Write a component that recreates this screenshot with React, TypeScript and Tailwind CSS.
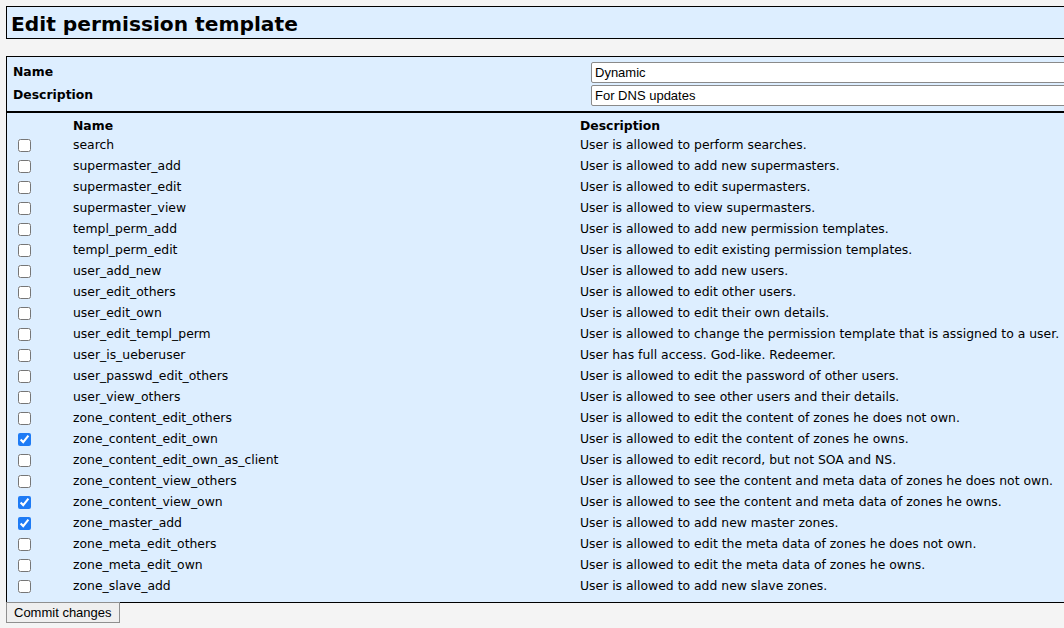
import React, { useState } from 'react';

const PERMS: [string, string, boolean][] = [
  ['search', 'User is allowed to perform searches.', false],
  ['supermaster_add', 'User is allowed to add new supermasters.', false],
  ['supermaster_edit', 'User is allowed to edit supermasters.', false],
  ['supermaster_view', 'User is allowed to view supermasters.', false],
  ['templ_perm_add', 'User is allowed to add new permission templates.', false],
  ['templ_perm_edit', 'User is allowed to edit existing permission templates.', false],
  ['user_add_new', 'User is allowed to add new users.', false],
  ['user_edit_others', 'User is allowed to edit other users.', false],
  ['user_edit_own', 'User is allowed to edit their own details.', false],
  ['user_edit_templ_perm', 'User is allowed to change the permission template that is assigned to a user.', false],
  ['user_is_ueberuser', 'User has full access. God-like. Redeemer.', false],
  ['user_passwd_edit_others', 'User is allowed to edit the password of other users.', false],
  ['user_view_others', 'User is allowed to see other users and their details.', false],
  ['zone_content_edit_others', 'User is allowed to edit the content of zones he does not own.', false],
  ['zone_content_edit_own', 'User is allowed to edit the content of zones he owns.', true],
  ['zone_content_edit_own_as_client', 'User is allowed to edit record, but not SOA and NS.', false],
  ['zone_content_view_others', 'User is allowed to see the content and meta data of zones he does not own.', false],
  ['zone_content_view_own', 'User is allowed to see the content and meta data of zones he owns.', true],
  ['zone_master_add', 'User is allowed to add new master zones.', true],
  ['zone_meta_edit_others', 'User is allowed to edit the meta data of zones he does not own.', false],
  ['zone_meta_edit_own', 'User is allowed to edit the meta data of zones he owns.', false],
  ['zone_slave_add', 'User is allowed to add new slave zones.', false],
];

const PermRow: React.FC<{ name: string; desc: string; initial: boolean }> = ({ name, desc, initial }) => {
  const [checked, setChecked] = useState(initial);
  return (
    <div className="flex h-[21px] items-center">
      <div className="w-[66px] pl-[11px] flex items-center">
        <input
          type="checkbox"
          checked={checked}
          onChange={(e) => setChecked(e.target.checked)}
          className="w-[13px] h-[13px] m-0 accent-[#1e7bf5]"
        />
      </div>
      <div className="w-[507px] whitespace-nowrap">{name}</div>
      <div className="whitespace-nowrap">{desc}</div>
    </div>
  );
};

export default function App() {
  const [name, setName] = useState('Dynamic');
  const [description, setDescription] = useState('For DNS updates');

  return (
    <div
      className="min-h-screen w-full overflow-hidden bg-[#f4f4f4] text-[12.4px] text-black pt-[6px] pl-[6px]"
      style={{ fontFamily: '"DejaVu Sans", Verdana, sans-serif' }}
    >
      <div className="w-[1080px] h-[33px] border border-black bg-[#ddeeff] flex items-center pl-[4px] pt-[4px]">
        <h1 className="text-[20.2px] font-bold leading-none">Edit permission template</h1>
      </div>

      <form className="mt-[17px]" onSubmit={(e) => e.preventDefault()}>
        <div className="w-[1080px] border border-black bg-[#ddeeff]">
          <div className="border-b-2 border-black pt-[4px] pb-[4px]">
            <div className="flex items-center h-[23px]">
              <div className="w-[584px] pl-[6px] font-bold">Name</div>
              <input
                value={name}
                onChange={(e) => setName(e.target.value)}
                className="w-[480px] h-[21px] bg-white border border-[#8a8a8a] rounded-[2px] px-[3px] text-[13px] outline-none"
                style={{ fontFamily: '"Liberation Sans", Arial, sans-serif' }}
              />
            </div>
            <div className="flex items-center h-[23px]">
              <div className="w-[584px] pl-[6px] font-bold">Description</div>
              <input
                value={description}
                onChange={(e) => setDescription(e.target.value)}
                className="w-[480px] h-[21px] bg-white border border-[#8a8a8a] rounded-[2px] px-[3px] text-[13px] outline-none"
                style={{ fontFamily: '"Liberation Sans", Arial, sans-serif' }}
              />
            </div>
          </div>

          <div className="pt-[4px] pb-[5px]">
            <div className="flex h-[18px] items-center font-bold">
              <div className="w-[66px]" />
              <div className="w-[507px]">Name</div>
              <div>Description</div>
            </div>
            {PERMS.map(([n, d, c]) => (
              <PermRow key={n} name={n} desc={d} initial={c} />
            ))}
          </div>
        </div>

        <button
          type="submit"
          className="-mt-[1px] h-[21px] px-[7px] bg-[#efefef] border border-[#8f8f8f] text-[13px] leading-none"
          style={{ fontFamily: '"Liberation Sans", Arial, sans-serif' }}
        >
          Commit changes
        </button>
      </form>
    </div>
  );
}
